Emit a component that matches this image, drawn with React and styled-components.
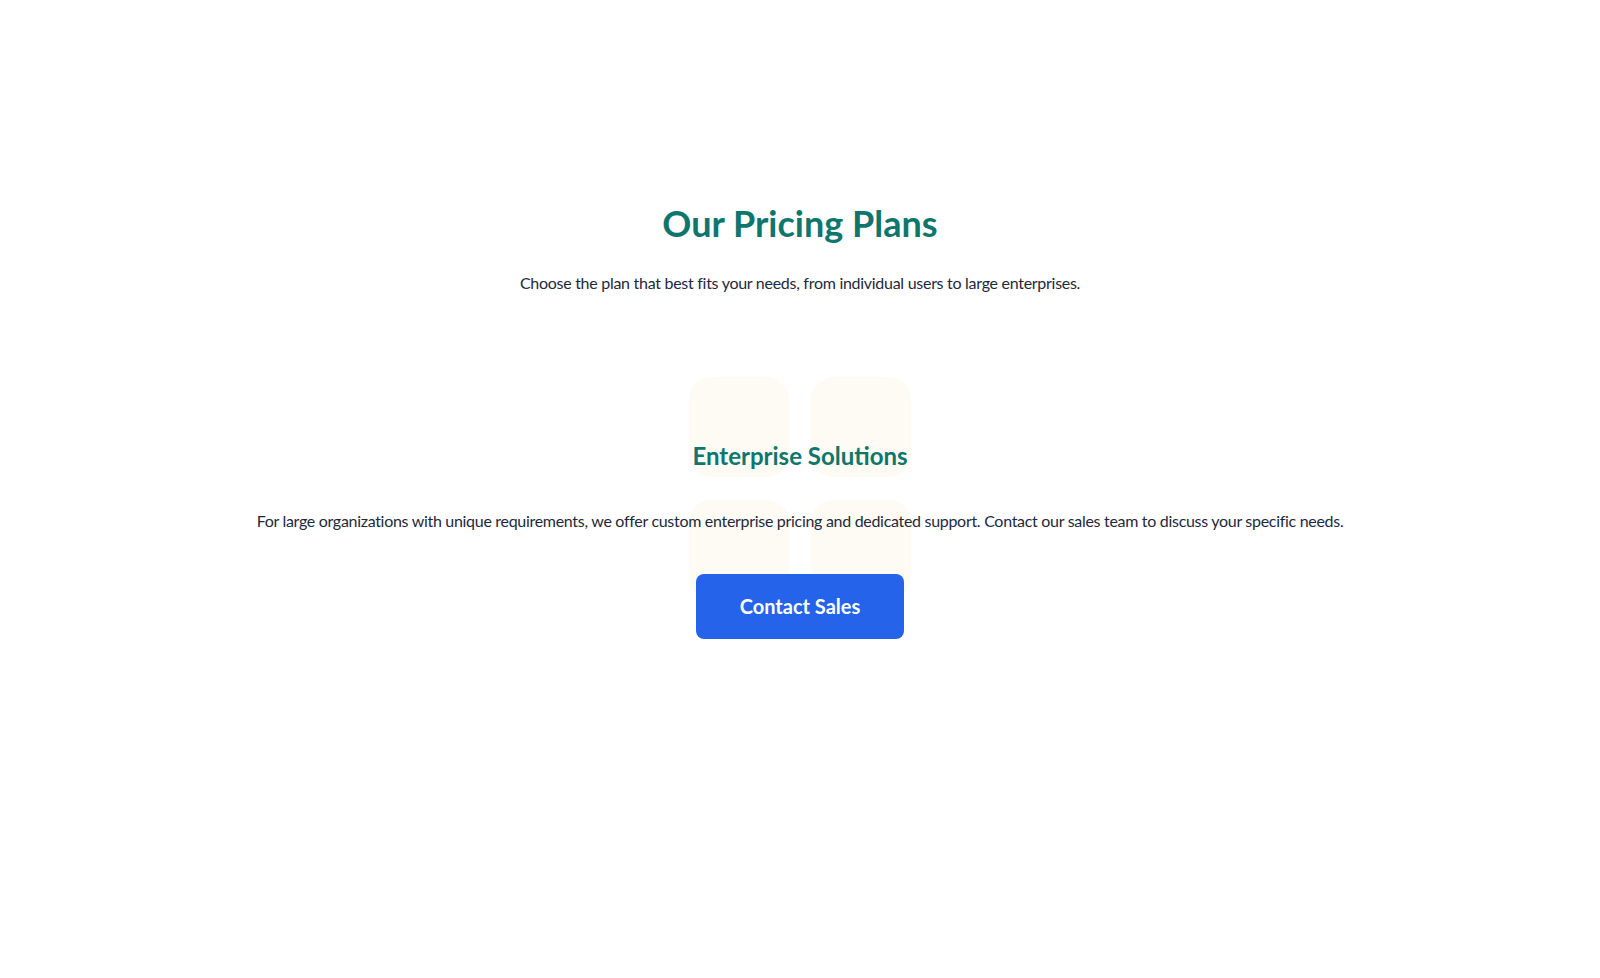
import React from 'react';
import styled, { createGlobalStyle } from 'styled-components';

const GlobalStyle = createGlobalStyle`
  html, body {
    margin: 0;
    padding: 0;
    background: #ffffff;
  }
  body {
    font-family: Lato, "Noto Sans", sans-serif;
    color: #1e293b;
  }
`;

const Page = styled.main`
  min-height: 978px;
  padding-top: 203px;
  box-sizing: border-box;
  display: flex;
  flex-direction: column;
  align-items: center;
`;

const Title = styled.h1`
  margin: 0 0 28px;
  font-size: 36px;
  line-height: 40px;
  font-weight: 700;
  color: #0f766e;
`;

const Subtitle = styled.p`
  margin: 0;
  font-size: 16px;
  line-height: 24px;
  letter-spacing: -0.28px;
  color: #1e293b;
`;

const Enterprise = styled.section`
  position: relative;
  margin-top: 145px;
  display: flex;
  flex-direction: column;
  align-items: center;
`;

// faint decorative squares behind the enterprise block
const TileGrid = styled.div`
  position: absolute;
  top: -63px;
  left: 50%;
  transform: translateX(-50%);
  display: grid;
  grid-template-columns: repeat(2, 100px);
  grid-auto-rows: 100px;
  gap: 23px 22px;
  z-index: 0;
`;

const Tile = styled.div`
  border-radius: 22px;
  background: #fdfbf3;
`;

const Heading = styled.h2`
  position: relative;
  margin: 0 0 37px;
  font-size: 24px;
  line-height: 32px;
  font-weight: 700;
  color: #0f766e;
`;

const Text = styled.p`
  position: relative;
  margin: 0 0 41px;
  font-size: 16px;
  line-height: 24px;
  letter-spacing: -0.3px;
`;

const Button = styled.button`
  position: relative;
  border: none;
  border-radius: 8px;
  background: #2563eb;
  color: #ffffff;
  font-family: Lato, "Noto Sans", sans-serif;
  font-size: 20px;
  font-weight: 700;
  line-height: 28px;
  padding: 18px 44px 19px;
  cursor: pointer;
`;

const App = () => (
  <>
    <GlobalStyle />
    <Page>
      <Title>Our Pricing Plans</Title>
      <Subtitle>
        Choose the plan that best fits your needs, from individual users to large enterprises.
      </Subtitle>
      <Enterprise>
        <TileGrid>
          <Tile />
          <Tile />
          <Tile />
          <Tile />
        </TileGrid>
        <Heading>Enterprise Solutions</Heading>
        <Text>
          For large organizations with unique requirements, we offer custom enterprise pricing and dedicated
          support. Contact our sales team to discuss your specific needs.
        </Text>
        <Button>Contact Sales</Button>
      </Enterprise>
    </Page>
  </>
);

export default App;
